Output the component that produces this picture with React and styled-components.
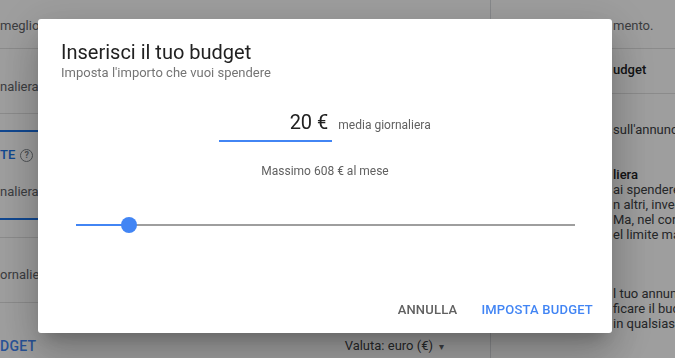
import React from "react"
import styled, { createGlobalStyle } from "styled-components"

const GlobalStyle = createGlobalStyle`
  * { box-sizing: border-box; }
  html, body { margin: 0; padding: 0; }
  body {
    font-family: Roboto, "Liberation Sans", Arial, sans-serif;
    background: #fff;
    overflow: hidden;
  }
`

const Page = styled.div`
  display: grid;
  grid-template-columns: 491px 1fr;
  width: 675px;
  height: 358px;
  overflow: hidden;
  color: #5f6368;
  font-size: 13px;
  line-height: 16px;
`

const Main = styled.main`
  display: flex;
  flex-direction: column;
  border-right: 1px solid #dadce0;
  white-space: nowrap;
  overflow: hidden;
`

const Row = styled.div`
  display: flex;
  align-items: center;
  height: ${({ $h }) => $h}px;
  padding-top: ${({ $top }) => $top || 0}px;
  align-items: flex-start;
  border-bottom: 1px solid ${({ $line }) => ($line ? "#e0e0e0" : "transparent")};
`

const Selected = styled.div`
  margin-top: 16px;
  height: 90px;
  border-top: 2px solid #1a73e8;
  border-bottom: 2px solid #1a73e8;
  padding-top: 15px;
  display: flex;
  flex-direction: column;
  gap: 21px;
`

const OptionLabel = styled.span`
  display: flex;
  align-items: center;
  gap: 5px;
  color: #1a73e8;
  font-weight: 500;
`

const HelpIcon = styled.span`
  display: inline-flex;
  align-items: center;
  justify-content: center;
  width: 13px;
  height: 13px;
  border: 1.5px solid #80868b;
  border-radius: 50%;
  color: #80868b;
  font-size: 9px;
  font-weight: 700;
  line-height: 1;
`

const Caret = styled.span`
  margin-left: 6px;
  font-size: 10px;
  color: #5f6368;
`

const BottomRow = styled.div`
  display: flex;
  align-items: flex-start;
  padding: 35px 46px 0 0;
`

const TextButton = styled.span`
  color: #4285f4;
  font-weight: 500;
  font-size: 14px;
  letter-spacing: 0.3px;
`

const Currency = styled.span`
  margin-left: auto;
  color: #3c4043;
`

const Side = styled.aside`
  display: flex;
  flex-direction: column;
  white-space: nowrap;
  overflow: hidden;
`

const SideRow = styled.div`
  height: ${({ $h }) => $h}px;
  padding: ${({ $top }) => $top || 0}px 0 0 122px;
  border-bottom: 1px solid #e0e0e0;
  color: ${({ $bold }) => ($bold ? "#202124" : "#5f6368")};
  font-weight: ${({ $bold }) => ($bold ? 500 : 400)};
`

const SideText = styled.p`
  margin: ${({ $top }) => $top}px 0 0;
  padding-left: 122px;
  line-height: 15px;
  color: #3c4043;
  b {
    color: #202124;
    font-weight: 500;
  }
`

const Scrim = styled.div`
  position: fixed;
  inset: 0;
  background: rgba(0, 0, 0, 0.38);
`

const Dialog = styled.div`
  position: fixed;
  left: 38px;
  top: 19px;
  width: 574px;
  height: 314px;
  background: #fff;
  border-radius: 3px;
  box-shadow: 0 11px 15px -7px rgba(0, 0, 0, 0.2),
    0 24px 38px 3px rgba(0, 0, 0, 0.14), 0 9px 46px 8px rgba(0, 0, 0, 0.12);
  display: flex;
  flex-direction: column;
  color: #212121;
`

const Header = styled.div`
  padding: 21px 23px 0;
`

const Title = styled.h2`
  margin: 0;
  font-size: 20px;
  line-height: 24px;
  font-weight: 400;
  color: #212121;
`

const Subtitle = styled.p`
  margin: 1px 0 0;
  font-size: 13px;
  line-height: 16px;
  color: #757575;
`

const AmountRow = styled.div`
  margin-top: 29px;
  display: flex;
  justify-content: center;
  align-items: baseline;
`

const AmountField = styled.div`
  width: 113px;
  padding: 0 4px 6px 0;
  border-bottom: 2px solid #4285f4;
  text-align: right;
  font-size: 20px;
  line-height: 24px;
  color: #212121;
`

const AmountUnit = styled.span`
  margin-left: 6px;
  font-size: 12px;
  color: #616161;
`

const Hint = styled.p`
  margin: 21px 0 0;
  text-align: center;
  font-size: 12px;
  line-height: 16px;
  color: #616161;
`

const SliderWrap = styled.div`
  margin: 38px 37px 0 38px;
  height: 16px;
  position: relative;
  display: flex;
  align-items: center;
`

const Track = styled.div`
  width: 100%;
  height: 2px;
  background: #9e9e9e;
`

const TrackFill = styled.div`
  height: 100%;
  background: #4285f4;
`

const Thumb = styled.div`
  position: absolute;
  top: 0;
  width: 16px;
  height: 16px;
  margin-left: -8px;
  border-radius: 50%;
  background: #4285f4;
`

const Actions = styled.div`
  margin-top: auto;
  padding: 0 19px 6px 0;
  height: 42px;
  display: flex;
  justify-content: flex-end;
  align-items: center;
  gap: 24px;
`

const ActionButton = styled.button`
  border: 0;
  padding: 0;
  background: none;
  font-family: inherit;
  font-size: 13px;
  font-weight: 500;
  letter-spacing: 0.2px;
  color: ${({ $primary }) => ($primary ? "#4285f4" : "#616161")};
  cursor: pointer;
`

const sliderPct = 10.6

const App = () => {
  return (
    <>
      <GlobalStyle />
      <Page>
        <Main>
          <Row $h={49} $top={18} $line>meglio</Row>
          <Row $h={65} $top={30} $line>
            naliera<Caret>▾</Caret>
          </Row>
          <Selected>
            <OptionLabel>
              TE <HelpIcon>?</HelpIcon>
            </OptionLabel>
            <span>
              naliera<Caret>▾</Caret>
            </span>
          </Selected>
          <Row $h={18} $line />
          <Row $h={65} $top={29} $line>ornaliera giornaliera</Row>
          <BottomRow>
            <TextButton>DGET</TextButton>
            <Currency>
              Valuta: euro (€)<Caret>▾</Caret>
            </Currency>
          </BottomRow>
        </Main>
        <Side>
          <SideRow $h={49} $top={18}>mento.</SideRow>
          <SideRow $h={45} $top={13} $bold>udget</SideRow>
          <SideText $top={28}>sull'annuncio</SideText>
          <SideText $top={30}>
            <b>liera</b>
            <br />
            ai spendere
            <br />
            n altri, invece
            <br />
            Ma, nel corso
            <br />
            el limite mass
          </SideText>
          <SideText $top={44}>
            l tuo annuncio
            <br />
            ficare il budget
            <br />
            in qualsiasi
          </SideText>
        </Side>
      </Page>
      <Scrim />
      <Dialog role="dialog">
        <Header>
          <Title>Inserisci il tuo budget</Title>
          <Subtitle>Imposta l'importo che vuoi spendere</Subtitle>
        </Header>
        <AmountRow>
          <AmountField>20 €</AmountField>
          <AmountUnit>media giornaliera</AmountUnit>
        </AmountRow>
        <Hint>Massimo 608 € al mese</Hint>
        <SliderWrap>
          <Track>
            <TrackFill style={{ width: `${sliderPct}%` }} />
          </Track>
          <Thumb style={{ left: `${sliderPct}%` }} />
        </SliderWrap>
        <Actions>
          <ActionButton>ANNULLA</ActionButton>
          <ActionButton $primary>IMPOSTA BUDGET</ActionButton>
        </Actions>
      </Dialog>
    </>
  )
}

export default App
